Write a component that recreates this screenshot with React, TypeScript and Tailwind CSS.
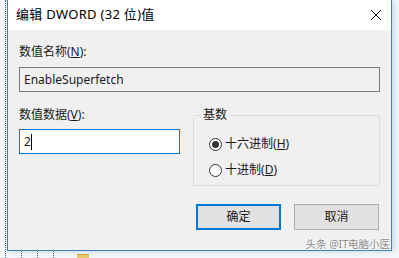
const font = { fontFamily: '"Noto Sans", "Noto Sans CJK SC", sans-serif' }

function Radio({ checked, label, hotkey }: { checked?: boolean; label: string; hotkey: string }) {
    return (
        <label className="flex items-center gap-[2px] text-[12px] text-[#1a1a1a] leading-[16px]">
            <span className="w-[13px] h-[13px] rounded-full border border-[#333] bg-white flex items-center justify-center">
                {checked && <span className="w-[7px] h-[7px] rounded-full bg-[#333]" />}
            </span>
            <span className="ml-[1px]">
                {label}(<span className="underline">{hotkey}</span>)
            </span>
        </label>
    )
}

export default function App() {
    return (
        <div className="relative w-[399px] h-[258px] overflow-hidden bg-[#f4f7fa] flex" style={font}>
            {/* desktop strip on the left */}
            <div className="w-[7px] h-full flex justify-end pr-[1px]">
                <div className="w-[1px] h-full border-l border-dotted border-[#3a5a80]" />
            </div>

            {/* dialog window */}
            <div className="w-[385px] h-[251px] flex flex-col border-x border-b border-[#3d7fbf] bg-[#f0f0f0] shadow-[2px_0_6px_rgba(120,160,200,0.4)]">
                <div className="h-[30px] bg-white flex items-center justify-between pl-[8px] pr-[8px]">
                    <span className="text-[13px] text-black tracking-[0.3px]">编辑 DWORD (32 位)值</span>
                    <svg width="12" height="12" viewBox="0 0 12 12" className="mr-[1px]">
                        <path d="M1 1 L11 11 M11 1 L1 11" stroke="#111" strokeWidth="1" />
                    </svg>
                </div>

                <div className="flex-1 flex flex-col px-[11px] pt-[14px] text-[12px] leading-[16px] text-[#1a1a1a]">
                    <div>
                        数值名称(<span className="underline">N</span>):
                    </div>
                    <div className="mt-[7px] h-[25px] w-[361px] border border-[#7a7a7a] bg-[#f0f0f0] flex items-center px-[4px] text-[12px]">
                        EnableSuperfetch
                    </div>

                    <div className="mt-[15px] flex">
                        <div className="w-[161px] flex flex-col">
                            <div>
                                数值数据(<span className="underline">V</span>):
                            </div>
                            <div className="mt-[6px] h-[25px] border border-[#0078d7] bg-white flex items-center px-[4px]">
                                <span>2</span>
                                <span className="w-[1px] h-[16px] bg-black" />
                            </div>
                        </div>

                        <fieldset className="ml-[13px] w-[187px] h-[79px] border border-[#dcdcdc] rounded-[2px] px-[15px]">
                            <legend className="px-[2px] -ml-[8px] text-[12px] leading-[16px]">基数</legend>
                            <div className="flex flex-col gap-[10px] pt-[13px]">
                                <Radio checked label="十六进制" hotkey="H" />
                                <Radio label="十进制" hotkey="D" />
                            </div>
                        </fieldset>
                    </div>

                    <div className="mt-[18px] flex justify-end gap-[13px] pr-[1px]">
                        <button className="w-[85px] h-[26px] border-2 border-[#0078d7] bg-[#e1e1e1] text-[12px]">确定</button>
                        <button className="w-[85px] h-[26px] border border-[#adadad] bg-[#e1e1e1] text-[12px]">取消</button>
                    </div>
                </div>
            </div>

            {/* tree view remains under the window */}
            <div className="absolute left-0 top-[251px] w-full h-[7px] flex items-start pl-[21px] gap-[15px]">
                <div className="w-[1px] h-full border-l border-dotted border-[#555]" />
                <div className="w-[1px] h-full border-l border-dotted border-[#555]" />
                <div className="w-[1px] h-full border-l border-dotted border-[#555]" />
                <div className="ml-[8px] w-[12px] h-[5px] mt-[3px] bg-[#e8c96a] border-t border-[#c9a640]" />
            </div>

            {/* watermark */}
            <div className="absolute right-[9px] top-[237px] text-[10.5px] text-[#8a8a8a] [text-shadow:0_0_2px_#fff,0_0_2px_#fff]">
                头条 @IT电脑小医
            </div>
        </div>
    )
}
